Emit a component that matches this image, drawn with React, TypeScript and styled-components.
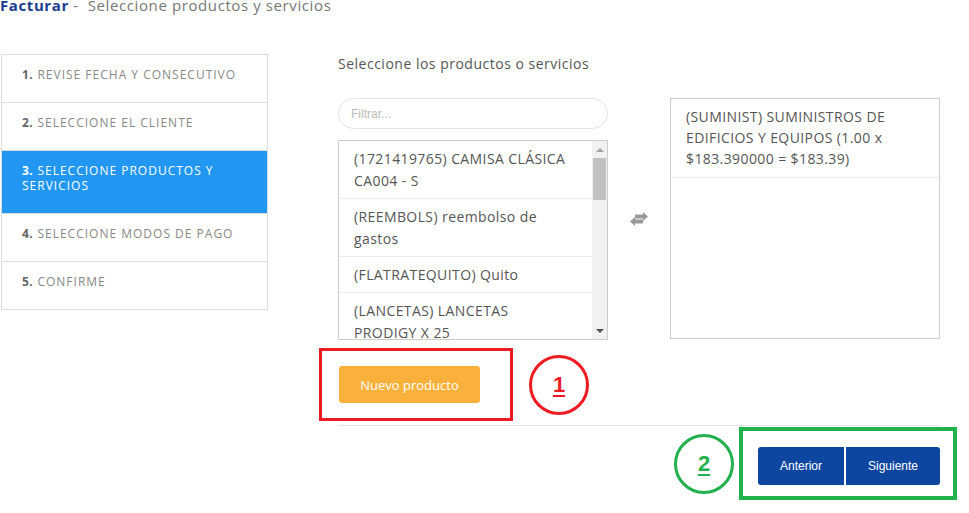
import React from "react";
import styled, { createGlobalStyle } from "styled-components";

const GlobalStyle = createGlobalStyle`
  html, body { margin: 0; padding: 0; background: #fff; }
  body { font-family: "Open Sans", "DejaVu Sans", sans-serif; overflow: hidden; }
  * { box-sizing: border-box; }
`;

const Page = styled.div`
  width: 969px;
  height: 513px;
  padding-left: 1px;
`;

const Header = styled.h1`
  margin: -5px 0 39px -1px;
  font-size: 15px;
  line-height: 20px;
  font-weight: 400;
  letter-spacing: 0.6px;
  color: #777;
  white-space: nowrap;
`;

const HeaderStrong = styled.span`
  color: #1c3d8f;
  font-weight: 700;
`;

const Body = styled.div`
  display: flex;
  align-items: flex-start;
  gap: 70px;
`;

const Steps = styled.ol`
  list-style: none;
  margin: 0;
  padding: 0;
  width: 267px;
  border: 1px solid #ddd;
`;

const Step = styled.li<{ $active?: boolean }>`
  padding: 12px 20px 20px 20px;
  font-size: 12px;
  line-height: 15px;
  letter-spacing: 1px;
  text-transform: uppercase;
  color: ${(p) => (p.$active ? "#fff" : "#888")};
  background: ${(p) => (p.$active ? "#2196f3" : "#fff")};
  border-bottom: 1px solid #ddd;
  &:last-child { border-bottom: none; }
`;

const StepNum = styled.b<{ $active?: boolean }>`
  font-weight: 700;
  letter-spacing: 0.5px;
  color: ${(p) => (p.$active ? "#fff" : "#666")};
`;

const Content = styled.div`
  width: 602px;
  display: flex;
  flex-direction: column;
`;

const Label = styled.div`
  font-size: 14px;
  line-height: 20px;
  letter-spacing: 0.5px;
  color: #555;
  margin-bottom: 24px;
`;

const Picker = styled.div`
  display: flex;
  align-items: flex-start;
`;

const Column = styled.div`
  width: 270px;
  display: flex;
  flex-direction: column;
  gap: 11px;
`;

const Filter = styled.input`
  height: 31px;
  width: 100%;
  border: 1px solid #e4e4e4;
  border-radius: 16px;
  padding: 0 12px;
  font-family: "Liberation Sans", Arial, sans-serif;
  font-size: 12px;
  color: #555;
  outline: none;
  &::placeholder { color: #bbb; }
`;

const ListBox = styled.div`
  height: 200px;
  border: 1px solid #ccc;
  display: flex;
`;

const Items = styled.ul`
  flex: 1;
  margin: 0;
  padding: 0;
  list-style: none;
  overflow: hidden;
`;

const Item = styled.li`
  padding: 7px 22px 6px 15px;
  font-size: 14px;
  line-height: 22px;
  letter-spacing: 0.4px;
  color: #555;
  border-bottom: 1px solid #eee;
`;

const ScrollTrack = styled.div`
  width: 15px;
  background: #f1f1f1;
  display: flex;
  flex-direction: column;
`;

const ScrollArrow = styled.div<{ $down?: boolean }>`
  height: 17px;
  display: flex;
  align-items: center;
  justify-content: center;
  &::after {
    content: "";
    width: 0;
    height: 0;
    border-left: 4px solid transparent;
    border-right: 4px solid transparent;
    ${(p) =>
      p.$down
        ? "border-top: 4px solid #505050;"
        : "border-bottom: 4px solid #a3a3a3;"}
  }
`;

const ScrollThumb = styled.div`
  height: 42px;
  margin: 0 1px;
  background: #c1c1c1;
`;

const ScrollSpace = styled.div`
  flex: 1;
`;

const SwapCell = styled.div`
  width: 62px;
  height: 241px;
  display: flex;
  align-items: center;
  justify-content: center;
  color: #999;
`;

const Selected = styled.ul`
  margin: 0;
  padding: 0;
  list-style: none;
  width: 270px;
  height: 241px;
  border: 1px solid #ccc;
`;

const SelectedItem = styled.li`
  padding: 7px 15px 8px 15px;
  font-size: 14px;
  line-height: 21px;
  letter-spacing: 0.4px;
  color: #555;
  border-bottom: 1px solid #eee;
`;

const ActionRow = styled.div`
  display: flex;
  align-items: center;
  gap: 16px;
  margin-top: 8px;
  margin-bottom: 4px;
`;

const RedBox = styled.div`
  margin-left: -19px;
  width: 194px;
  border: 3px solid #ed1c24;
  padding: 15px 0 15px 17px;
`;

const Callout = styled.div<{ $color: string }>`
  width: 60px;
  height: 60px;
  border-radius: 50%;
  border: 3px solid ${(p) => p.$color};
  color: ${(p) => p.$color};
  display: flex;
  align-items: center;
  justify-content: center;
  font-family: "Liberation Sans", Arial, sans-serif;
  font-weight: 700;
  font-size: 22px;
  text-decoration: underline;
  text-underline-offset: 3px;
`;

const OrangeButton = styled.button`
  width: 141px;
  height: 37px;
  border: none;
  border-radius: 3px;
  background: #fbb03b;
  color: #fff;
  font-family: inherit;
  font-size: 13px;
  cursor: pointer;
`;

const Divider = styled.hr`
  margin: 0;
  border: none;
  border-top: 1px solid #e5e5e5;
  width: 602px;
`;

const NavRow = styled.div`
  display: flex;
  align-items: center;
  justify-content: flex-end;
  margin-top: 1px;
  margin-right: -17px;
  gap: 5px;
`;

const GreenBox = styled.div`
  border: 4px solid #22b14c;
  padding: 16px 13px 11px 15px;
  display: flex;
  gap: 2px;
`;

const NavButton = styled.button<{ $first?: boolean }>`
  height: 38px;
  border: none;
  background: #0d46a0;
  color: #fff;
  font-family: "Liberation Sans", Arial, sans-serif;
  font-size: 12px;
  padding: 0;
  width: ${(p) => (p.$first ? "86px" : "94px")};
  border-radius: ${(p) => (p.$first ? "3px 0 0 3px" : "0 3px 3px 0")};
  cursor: pointer;
`;

const SwapIcon = () => (
  <svg width="22" height="16" viewBox="0 0 22 16" fill="currentColor">
    <path d="M7 3.5h8V1l5 4.5-5 4.5V7.5H7z" />
    <path d="M15 8.5H7V6L2 10.5 7 15v-2.5h8z" />
  </svg>
);

const products = [
  "(1721419765) CAMISA CLÁSICA CA004 - S",
  "(REEMBOLS) reembolso de gastos",
  "(FLATRATEQUITO) Quito",
  "(LANCETAS) LANCETAS PRODIGY X 25",
  "(1721419766) CAMISA CLÁSICA CA004 - M",
  "(1721419767) CAMISA CLÁSICA CA004 - L",
  "(SERVTEC) Servicio técnico",
];

const steps = [
  { n: "1.", t: "Revise fecha y consecutivo" },
  { n: "2.", t: "Seleccione el cliente" },
  { n: "3.", t: "Seleccione productos y servicios", active: true },
  { n: "4.", t: "Seleccione modos de pago" },
  { n: "5.", t: "Confirme" },
];

export default function App() {
  return (
    <Page>
      <GlobalStyle />
      <Header>
        <HeaderStrong>Facturar</HeaderStrong> -&nbsp; Seleccione productos y servicios
      </Header>
      <Body>
        <Steps>
          {steps.map((s) => (
            <Step key={s.n} $active={s.active}>
              <StepNum $active={s.active}>{s.n}</StepNum> {s.t}
            </Step>
          ))}
        </Steps>
        <Content>
          <Label>Seleccione los productos o servicios</Label>
          <Picker>
            <Column>
              <Filter placeholder="Filtrar..." />
              <ListBox>
                <Items>
                  {products.map((p) => (
                    <Item key={p}>{p}</Item>
                  ))}
                </Items>
                <ScrollTrack>
                  <ScrollArrow />
                  <ScrollThumb />
                  <ScrollSpace />
                  <ScrollArrow $down />
                </ScrollTrack>
              </ListBox>
            </Column>
            <SwapCell>
              <SwapIcon />
            </SwapCell>
            <Selected>
              <SelectedItem>
                (SUMINIST) SUMINISTROS DE EDIFICIOS Y EQUIPOS (1.00 x $183.390000 = $183.39)
              </SelectedItem>
            </Selected>
          </Picker>
          <ActionRow>
            <RedBox>
              <OrangeButton>Nuevo producto</OrangeButton>
            </RedBox>
            <Callout $color="#ed1c24">1</Callout>
          </ActionRow>
          <Divider />
          <NavRow>
            <Callout $color="#22b14c">2</Callout>
            <GreenBox>
              <NavButton $first>Anterior</NavButton>
              <NavButton>Siguiente</NavButton>
            </GreenBox>
          </NavRow>
        </Content>
      </Body>
    </Page>
  );
}
